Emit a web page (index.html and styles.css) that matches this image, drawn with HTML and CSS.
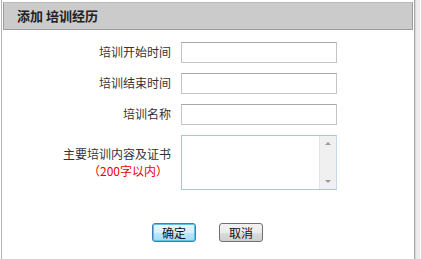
FILE: index.html
```html
<!DOCTYPE html>
<html>
<head>
<meta charset="utf-8">
<link rel="stylesheet" href="styles.css">
</head>
<body>
<div class="page">
  <div class="panel">
    <div class="head">添加 培训经历</div>
    <div class="form">
      <div class="row">
        <label class="lbl">培训开始时间</label>
        <input class="inp" type="text">
      </div>
      <div class="row">
        <label class="lbl">培训结束时间</label>
        <input class="inp" type="text">
      </div>
      <div class="row">
        <label class="lbl">培训名称</label>
        <input class="inp" type="text">
      </div>
      <div class="row area-row">
        <div class="lbl multi">主要培训内容及证书<br><span class="red">（200字以内）</span></div>
        <div class="area">
          <div class="scroll">
            <span class="arr up"></span>
            <span class="arr down"></span>
          </div>
        </div>
      </div>
      <div class="btns">
        <button class="btn ok">确定</button>
        <button class="btn">取消</button>
      </div>
    </div>
  </div>
  <div class="side"></div>
</div>
</body>
</html>
```
FILE: styles.css
```css
html, body { margin: 0; padding: 0; background: #fff; }
body { font-family: "Noto Sans CJK SC", "DejaVu Sans", sans-serif; font-size: 12px; color: #333; }
.page { display: flex; width: 421px; height: 259px; overflow: hidden; }
.panel { width: 414px; border-left: 1px solid #b4b4b4; margin-left: 1px; border-right: 1px solid #a8a8a8; padding-top: 2px; box-sizing: border-box; }
.side { width: 4px; background: #ececec; border-left: 1px solid #d8d8d8; }
.head { margin-left: 1px; width: 410px; height: 28px; box-sizing: border-box; background: #cbcbcb; border: 1px solid #9d9d9d; border-top-color: #bbb; font-weight: bold; font-size: 13px; color: #222; line-height: 26px; padding-left: 13px; }
.form { padding-top: 12px; }
.row { display: flex; align-items: center; height: 20px; margin-bottom: 11px; }
.lbl { width: 179px; text-align: right; padding-right: 10px; box-sizing: border-box; font-size: 12px; line-height: 16px; color: #333; }
.inp { width: 156px; height: 21px; box-sizing: border-box; border: 1px solid #c4c4c4; border-top-color: #a8a8a8; margin: 0; padding: 0; background: #fff; }
.area-row { height: 55px; align-items: flex-start; margin-bottom: 0; }
.multi { padding-top: 10px; padding-right: 10px; line-height: 17px; }
.red { color: #e00; padding-right: 3px; }
.area { width: 156px; height: 55px; box-sizing: border-box; border: 1px solid #a9c6de; border-right-color: #c8d8e6; display: flex; justify-content: flex-end; }
.scroll { width: 16px; height: 100%; background: #f0f0f0; border-left: 1px solid #e4e4e4; position: relative; }
.arr { position: absolute; left: 5px; width: 0; height: 0; border-left: 3px solid transparent; border-right: 3px solid transparent; }
.up { top: 6px; border-bottom: 3px solid #9a9a9a; }
.down { bottom: 6px; border-top: 3px solid #9a9a9a; }
.btns { display: flex; gap: 23px; padding-left: 150px; padding-top: 33px; }
.btn { width: 44px; height: 19px; padding: 0; font-family: inherit; font-size: 12px; line-height: 15px; color: #111; border: 1px solid #707070; border-radius: 3px; background: linear-gradient(#f2f2f2, #ebebeb 50%, #dcdcdc 51%, #cfcfcf); }
.ok { border-color: #3c7fb1; box-shadow: inset 0 0 0 1px #5fc0e6; background: linear-gradient(#eaf6fd, #d9f0fc 50%, #bee6fd 51%, #a7d9f5); }
```
